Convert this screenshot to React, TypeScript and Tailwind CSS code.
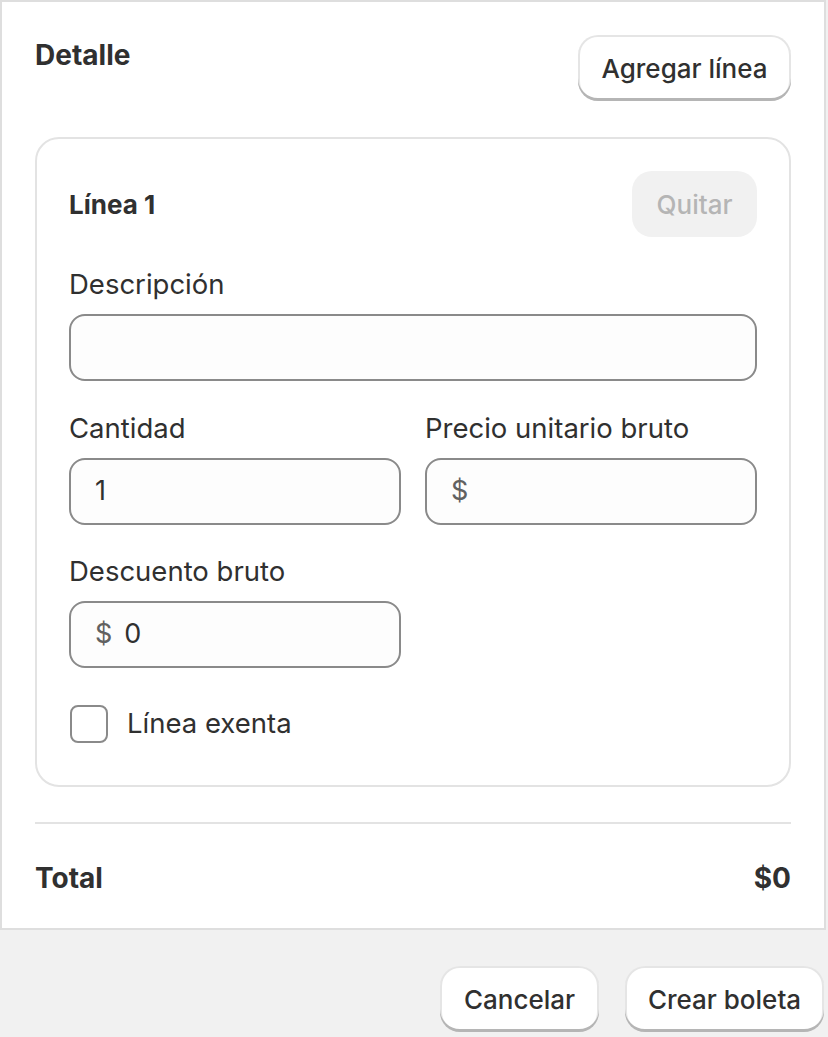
import { FC } from "react";

const btn =
  "bg-white rounded-[20px] h-[66px] text-[26px] font-medium text-[#303030] shadow-[inset_0_-3px_0_0_#b5b5b5,inset_0_0_0_2px_rgba(0,0,0,0.1)]";

const Field: FC<{ label: string; prefix?: string; value?: string }> = ({ label, prefix, value }) => (
  <div className="flex flex-col">
    <label className="h-[36px] leading-[36px] mb-[12px] text-[27.5px] text-[#303030]">{label}</label>
    <div className="h-[67px] rounded-[16px] border-2 border-[#8a8a8a] bg-[#fdfdfd] flex items-center px-[24px] gap-[12px] text-[27px]">
      {prefix && <span className="text-[#616161]">{prefix}</span>}
      {value && <span className="text-[#303030]">{value}</span>}
    </div>
  </div>
);

const App: FC = () => {
  return (
    <div className="w-[828px] h-[1037px] bg-[#f1f1f1] flex flex-col" style={{ fontFamily: "Inter, 'Noto Sans', sans-serif" }}>
      <div className="w-[826px] h-[930px] bg-white border-2 border-[#dedede] px-[33px] pt-[33px] flex flex-col">
        <div className="flex justify-between items-start">
          <h2 className="text-[28px] leading-[40px] font-bold text-[#303030]">Detalle</h2>
          <button className={`${btn} w-[213px]`}>Agregar línea</button>
        </div>

        <div className="mt-[36px] border-2 border-[#e3e3e3] rounded-[24px] px-[32px] pt-[32px] pb-[41px] flex flex-col">
          <div className="h-[66px] flex justify-between items-center">
            <h3 className="text-[26px] font-bold text-[#303030]">Línea 1</h3>
            <button className="w-[125px] h-[66px] rounded-[20px] bg-[#f1f1f1] text-[26px] font-medium text-[#b5b5b5]">
              Quitar
            </button>
          </div>
          <div className="mt-[29px]">
            <Field label="Descripción" />
          </div>
          <div className="mt-[29px] grid grid-cols-2 gap-[24px]">
            <Field label="Cantidad" value="1" />
            <Field label="Precio unitario bruto" prefix="$" />
          </div>
          <div className="mt-[28px] grid grid-cols-2 gap-[24px]">
            <Field label="Descuento bruto" prefix="$" value="0" />
          </div>
          <div className="mt-[36px] h-[40px] flex items-center gap-[19px] pl-[1px]">
            <span className="w-[38px] h-[38px] rounded-[8px] border-2 border-[#8a8a8a] bg-white" />
            <span className="text-[27.5px] text-[#303030]">Línea exenta</span>
          </div>
        </div>

        <div className="mt-[35px] h-[2px] bg-[#e3e3e3]" />

        <div className="mt-[34px] flex justify-between items-center h-[40px]">
          <span className="text-[28px] font-bold text-[#303030]">Total</span>
          <span className="text-[28px] font-bold text-[#303030]">$0</span>
        </div>
      </div>

      <div className="flex justify-end gap-[26px] pt-[36px] pr-[4px]">
        <button className={`${btn} w-[159px]`}>Cancelar</button>
        <button className={`${btn} w-[199px]`}>Crear boleta</button>
      </div>
    </div>
  );
};

export default App;
